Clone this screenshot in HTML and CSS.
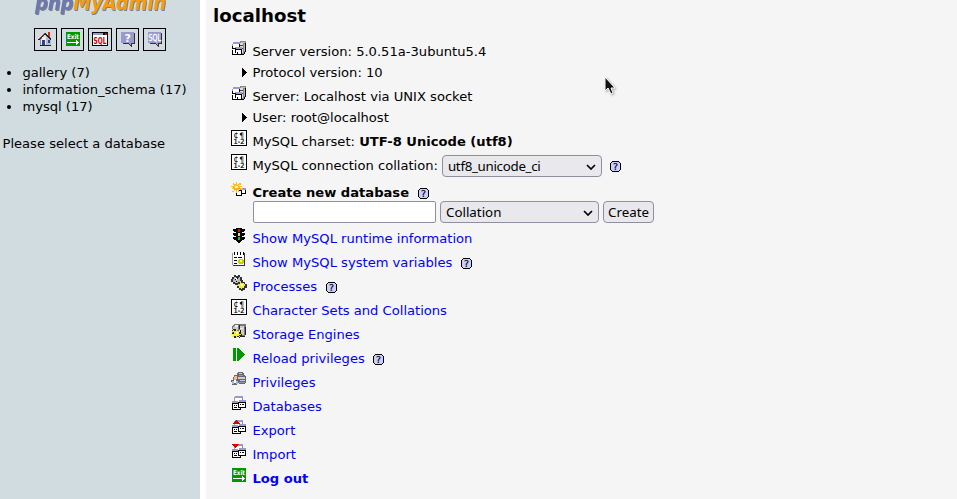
FILE: index.html
```html
<!DOCTYPE html>
<html lang="en">
<head>
<meta charset="utf-8">
<title>phpMyAdmin</title>
<link rel="stylesheet" href="styles.css">
</head>
<body>
<svg class="defs" aria-hidden="true">
  <symbol id="host" viewBox="0 -1 16 16">
    <path fill="#888" d="M8 1h1V0h6v11h-1v1h-1v1H8z"/><path fill="#ddd" d="M9 2h3v10H9z"/><path fill="#bbb" d="M10 1h4v1h-4zM13 3h1v7h-1z"/><path fill="#444" d="M9 4h3v1H9zM9 7h3v1H9z"/><path fill="#000" d="M14 2h1v9h-1zM9 13h4v1H9zM13 11h1v2h-1z"/>
    <path fill="#fff" d="M2 3h6v4H2zM5 8h5v5H5zM2 9h3v4H2z"/><path fill="#99c" d="M2 1h7v2H2zM1 3h1v2H1zM4 6h7v2H4z"/><path fill="#000" d="M1 5h1v3H1zM2 7h3v1H2zM8 3h1v3H8zM4 8h7v1H4zM4 9h1v3H4zM10 9h1v5h-1zM6 13h5v1H6zM1 9h1v5H1zM1 13h6v1H1zM6 11h1v3H6z"/>
  </symbol>
  <symbol id="charset" viewBox="0 0 16 16">
    <path fill="#000" d="M0 0h16v16H0z"/><path fill="#fff" d="M1 1h14v14H1z"/>
    <text x="2.5" y="7.8" font-size="8">¢</text><text x="8.3" y="7.5" font-size="7.5">¶</text><text x="2.5" y="14" font-size="7" textLength="11" lengthAdjust="spacingAndGlyphs" stroke="#000" stroke-width=".2">1-2</text>
  </symbol>
  <symbol id="windows" viewBox="0 -1 16 16">
    <path fill="#fff" d="M4 2h7v4H4zM2 8h6v5H2zM8 7h6v4H8z"/><path fill="#99c" d="M4 0h8v2H4zM3 1h1v4H3zM8 4h7v2H8zM1 5h6v2H1z"/>
    <path fill="#888" d="M11 2h1v2h-1z"/><path fill="#000" d="M1 7h6v1H1zM1 8h1v6H1zM2 13h8v1H2zM9 12h1v1H9zM7 6h8v1H7zM7 7h1v5H7zM14 7h1v5h-1zM8 11h6v1H8zM3 9h1v1H3zM5 9h1v1H5zM3 11h3v1H3zM9 8h1v1H9zM11 8h2v1h-2z"/>
  </symbol>
  <symbol id="new" viewBox="0 -1 16 16">
    <path fill="#fff" d="M6 9h8v4H6z"/><path fill="#99c" d="M9 6h6v2H9z"/><path fill="#000" d="M5 9h1v5H5zM6 13h5v1H6zM10 8h1v5h-1zM14 8h1v4h-1zM11 11h3v1h-3zM8 8h3v1H8z"/>
    <path fill="#fb2" d="M5 0h1v3h1V2h1V1h2v2H8v1h3v1H9v1h2v1h1v1h-2V7H8v3H7V8H6v3H5V8H4v1H3v1H1V9h2V7H1V6h2V5H0V4h3V3H2V1h1v1h2z"/><path fill="#f90" d="M4 7h2v1H4zM7 6h2v1H7zM2 5h1v1H2z"/><path fill="#ff9" d="M4 4h3v2H4z"/>
  </symbol>
  <symbol id="lights" viewBox="0 -1 16 16">
    <path fill="#000" d="M5 0h6v1h3v2h-1v1h-2v1h3v2h-1v1h-2v1h3v2h-1v1h-2v1h-1v1H9v1H7v-1H6v-1H5v-1H3v-1H2V9h3V8H3V7H2V5h3V4H3V3H2V1h3z"/>
    <path fill="#e00" d="M7 1h2v3H7z"/><path fill="#fd3" d="M7 5h2v3H7z"/><path fill="#1b4" d="M7 9h2v3H7z"/>
  </symbol>
  <symbol id="vars" viewBox="0 -1 16 16">
    <path fill="#fff" d="M2 1h11v12H2z"/><path fill="#999" d="M1 1h1v12H1z"/><path fill="#333" d="M13 1h1v13h-1zM2 13h12v1H2z"/><path fill="#000" d="M3 0h1v3H3zM6 0h1v3H6zM9 0h1v3H9zM12 0h1v3h-1zM3 5h3v1H3zM7 5h4v1H7zM3 8h3v1H3zM3 11h3v1H3z"/><path fill="#cc0" d="M8 7h4v1h1v3h-1v1H8v-1H7V8h1z"/><path fill="#ff6" d="M9 8h2v2H9z"/>
  </symbol>
  <symbol id="process" viewBox="0 0 16 16">
    <path fill="#333" d="M3 0h2v1h2V0h2v2h2v3h1v2h2v2h2v4h-2v2h-2v1h-2v-1H8v-2H6v-3H4V9H2V7H0V4h1V2h2z"/><path fill="#bbb" d="M3 2h2v1h3V2h1v5H7v1H4V7H2V4h1z"/><path fill="#fff" d="M4 3h2v2H4z"/><path fill="#ee3" d="M9 6h1v2h3v1h1v2h-1v2h-2v1h-1v-1H8v-2H6v-1h1V9h2z"/><path fill="#000" d="M4 4h1v1H4zM6 3h1v1H6zM5 6h1v1H5z"/><path fill="#fff" d="M10 9h2v2h-2z"/>
  </symbol>
  <symbol id="engine" viewBox="0 -1 16 16">
    <path fill="#777" d="M2 1h1V0h12v11h-1v2H9v-2H1V2h1z"/><path fill="#ccc" d="M3 2h4v4H2V3h1zM9 2h4v9H9z"/><path fill="#eee" d="M4 1h3v2H4zM9 4h3v1H9z"/><path fill="#222" d="M2 5h3v1h1v1h3V6h1v4h1v3h-2v1H8v-1H5v1H3v-3H1V9h1V7H1V6h1zM14 3h1v8h-1zM8 1h1v4H8zM11 12h3v1h-3z"/>
    <path fill="#ee3" d="M1 5h1v1h1v1h2V5h1v2h2V6h1v2H8v2h2v1H8v1h1v1H8v-1H6v2H5v-2H3v1H1v-1h1v-1H0v-1h3V8H1V7h1V6H1z"/><path fill="#fff" d="M5 8h2v2H5z"/>
  </symbol>
  <symbol id="reload" viewBox="0 0 16 16"><path fill="#090" d="M2 1h3v13H2zM6 1h2v1h1v1h1v1h1v1h1v1h1v1h1v1h-1v1h-1v1h-1v1h-1v1H9v1H8v1H6z"/></symbol>
  <symbol id="rights" viewBox="0 0 16 16">
    <path fill="#667" d="M6 2h1V1h5v1h1v2h1v1h1v7h-1v1H8v-1H6v2H1v-3H0V9h2V6h1V4h3z"/><path fill="#ccd" d="M8 2h3v1H8zM7 6h7v2H7zM9 9h5v1H9z"/><path fill="#999" d="M8 4h4v1H8zM8 11h6v1H8z"/><path fill="#fb7" d="M3 5h3v4H3z"/><path fill="#c73" d="M3 5h1v1H3zM5 8h1v1H5z"/><path fill="#9be" d="M1 10h2v3H1zM5 10h2v3H5z"/><path fill="#fff" d="M3 9h2v3H3z"/>
  </symbol>
  <symbol id="export" viewBox="0 0 16 16"><use href="#windows" width="16" height="16"/><path fill="#d00" d="M5 1h1v1h1v1h1v1h1v1H2V4h1V3h1V2h1z"/></symbol>
  <symbol id="import" viewBox="0 0 16 16"><use href="#windows" width="16" height="16"/><path fill="#d00" d="M1 1h7v1H7v1H6v1H5v1H4V4H3V3H2V2H1z"/></symbol>
  <symbol id="exit" viewBox="0 0 16 16">
    <path fill="#090" d="M1 1h14v14H1z"/><text x="2" y="8" font-size="6.5" font-weight="bold" fill="#fff" textLength="12" lengthAdjust="spacingAndGlyphs">Exit</text><path fill="#fff" d="M2 11h9V9h1v1h1v1h1v1h-1v1h-1v1h-1v-2H2z"/>
  </symbol>
  <symbol id="home" viewBox="0 0 16 16">
    <path fill="#888" d="M3 7h11v7H3z"/><path fill="#eee" d="M4 8h5v6H4zM5 6h4v3H5z"/><path fill="#bbb" d="M9 4h3v2h2v8H9z"/><path fill="#249" d="M5 9h3v5H5zM11 9h2v3h-2z"/><path fill="#222" d="M7 2h2v1h1v1h1v1h1v1h1v1h1v2h-1V8h-1V7h-1V6h-1V5H9V4H7v1H6v1H5v1H4v1H3v1H1V8h1V7h1V6h1V5h1V4h1V3h1zM3 14h11v1H3z"/><path fill="#d22" d="M7 2h1v1H7v1H6v1H5v1H4v1H3v1H2V7h1V6h1V5h1V4h1V3h1zM11 1h2v5h-1V5h-1z"/>
  </symbol>
  <symbol id="sql" viewBox="0 0 16 16">
    <path fill="#000" d="M0 1h16v14H0z"/><path fill="#fff" d="M1 4h14v10H1z"/><path fill="#99c" d="M1 2h10v2H1z"/><path fill="#c00" d="M13 2h2v2h-2z"/><text x="1.5" y="12.5" font-size="8" font-weight="bold" fill="#c00" textLength="13" lengthAdjust="spacingAndGlyphs">SQL</text>
  </symbol>
  <symbol id="bubble" viewBox="0 0 16 16"><path fill="#333" d="M3 13h6v1h1v1h1v1h1v-3h3V2h-1v10h-3v2h-1v-1H9v-1H3z"/><path fill="#99c" d="M1 1h13v11h-3v2h-1v-1H9v-1H1z"/></symbol>
  <symbol id="docs" viewBox="0 0 16 16"><use href="#bubble"/><text x="4.5" y="10.5" font-size="11" font-weight="bold" fill="#fff">?</text></symbol>
  <symbol id="sqldocs" viewBox="0 0 16 16"><use href="#bubble"/><text x="1.5" y="9.5" font-size="9" fill="#fff" stroke="#fff" stroke-width=".3" textLength="12.5" lengthAdjust="spacingAndGlyphs">SQL</text></symbol>
  <symbol id="help" viewBox="0 0 11 11"><path fill="#000" d="M2 0h7v1h1v1h1v7h-1v1H9v1H2v-1H1V9H0V2h1V1h1z"/><path fill="#ccf" d="M2 1h7v1h1v7H9v1H2V9H1V2h1z"/><text x="3" y="9" font-size="9.5" fill="#000" stroke="#000" stroke-width=".2">?</text></symbol>
  <symbol id="arrow" viewBox="0 0 16 16"><path d="M11 4h1v1h1v1h1v1h1v1h1v1h-1v1h-1v1h-1v1h-1v1h-1z"/></symbol>
</svg>

<aside class="sidebar">
  <svg class="logo" viewBox="0 0 200 30" role="img" aria-label="phpMyAdmin">
    <text x="35" y="26" textLength="131" lengthAdjust="spacingAndGlyphs"><tspan class="logo-php">php</tspan><tspan class="logo-admin">MyAdmin</tspan></text>
  </svg>
  <nav class="tools">
    <a class="tool"><svg class="icon"><use href="#home"/></svg></a>
    <a class="tool inset"><svg class="icon"><use href="#exit"/></svg></a>
    <a class="tool inset wide"><svg class="icon"><use href="#sql"/></svg></a>
    <a class="tool inset"><svg class="icon"><use href="#docs"/></svg></a>
    <a class="tool inset"><svg class="icon"><use href="#sqldocs"/></svg></a>
  </nav>
  <ul class="databases">
    <li>gallery (7)</li>
    <li>information_schema (17)</li>
    <li>mysql (17)</li>
  </ul>
  <p class="hint">Please select a database</p>
</aside>

<main class="main">
  <h1>localhost</h1>
  <div class="row"><svg class="icon"><use href="#host"/></svg><span>Server version: 5.0.51a-3ubuntu5.4</span></div>
  <div class="row sub"><svg class="icon"><use href="#arrow"/></svg><span>Protocol version: 10</span></div>
  <div class="row spaced"><svg class="icon"><use href="#host"/></svg><span>Server: Localhost via UNIX socket</span></div>
  <div class="row sub"><svg class="icon"><use href="#arrow"/></svg><span>User: root@localhost</span></div>
  <div class="row spaced"><svg class="icon"><use href="#charset"/></svg><span>MySQL charset: <b>UTF-8 Unicode (utf8)</b></span></div>
  <div class="row collation"><svg class="icon"><use href="#charset"/></svg><span>MySQL connection collation:</span>
    <div class="select conn"><span>utf8_unicode_ci</span><svg class="chevron" viewBox="0 0 10 6"><path d="M1 1l4 4 4-4"/></svg></div><svg class="help"><use href="#help"/></svg></div>
  <div class="row create"><svg class="icon"><use href="#new"/></svg><b>Create new database</b><svg class="help"><use href="#help"/></svg></div>
  <form class="form"><input class="name" type="text"><div class="select"><span>Collation</span><svg class="chevron" viewBox="0 0 10 6"><path d="M1 1l4 4 4-4"/></svg></div><button class="button" type="button">Create</button></form>
  <div class="row"><svg class="icon"><use href="#lights"/></svg><a>Show MySQL runtime information</a></div>
  <div class="row"><svg class="icon"><use href="#vars"/></svg><a>Show MySQL system variables</a><svg class="help"><use href="#help"/></svg></div>
  <div class="row"><svg class="icon"><use href="#process"/></svg><a>Processes</a><svg class="help"><use href="#help"/></svg></div>
  <div class="row"><svg class="icon"><use href="#charset"/></svg><a>Character Sets and Collations</a></div>
  <div class="row"><svg class="icon"><use href="#engine"/></svg><a>Storage Engines</a></div>
  <div class="row"><svg class="icon"><use href="#reload"/></svg><a>Reload privileges</a><svg class="help"><use href="#help"/></svg></div>
  <div class="row"><svg class="icon"><use href="#rights"/></svg><a>Privileges</a></div>
  <div class="row"><svg class="icon"><use href="#windows"/></svg><a>Databases</a></div>
  <div class="row"><svg class="icon"><use href="#export"/></svg><a>Export</a></div>
  <div class="row"><svg class="icon"><use href="#import"/></svg><a>Import</a></div>
  <div class="row"><svg class="icon"><use href="#exit"/></svg><a><b>Log out</b></a></div>
</main>
<svg class="cursor" viewBox="0 0 12 20"><path d="M1 1v14l3-3 3 6 2-1-2-5h4z"/></svg>
</body>
</html>
```
FILE: styles.css
```css
* { box-sizing: border-box; }
body {
  margin: 0;
  height: 499px;
  display: flex;
  gap: 6px;
  overflow: hidden;
  background: #fff;
  color: #000;
  font: 13.1px/17px "DejaVu Sans", sans-serif;
}
.defs { display: none; }
svg { display: block; flex: none; }
.sidebar { width: 200px; background: #d0dce0; }
.logo { width: 200px; height: 30px; margin-top: -16px; overflow: visible; font: italic bold 22px "DejaVu Sans", sans-serif; filter: drop-shadow(1px 1px 0 #7c8489); }
.logo-php { fill: #6c78af; }
.logo-admin { fill: #f89c0e; }
.tools { display: flex; gap: 4px; margin: 14px 0 0 34px; }
.tool { width: 23px; height: 23px; padding: 2px; border: 1px solid #000; }
.tool.inset { padding-left: 3px; }
.tool.wide { width: 24px; }
.icon { width: 16px; height: 16px; shape-rendering: crispEdges; font-family: "DejaVu Sans", sans-serif; }
.databases { margin: 13px 0 0; padding-left: 22.4px; }
.hint { margin: 20px 0 0 2.5px; }
.main { flex: 1; background: #f5f5f5; padding-left: 7px; }
h1 { margin: 4px 0 12px; font-size: 18.2px; line-height: 23px; }
.row { display: flex; align-items: center; height: 24px; padding-left: 18px; }
.row .icon { align-self: flex-start; margin: 1px 5.5px 0 0; }
.row.sub { height: 18px; }
.spaced { margin-top: 3px; }
.row.collation { height: 25px; }
.row.create { margin-top: 2px; }
.help { width: 11px; height: 11px; margin: 3px 0 0 8.5px; shape-rendering: crispEdges; font-family: "DejaVu Sans", sans-serif; }
a { color: #00f; }
.select, .name, .button {
  height: 22px;
  border: 1px solid #8f8f9d;
  border-radius: 4px;
  font: 13.333px/20px "Noto Sans", sans-serif;
}
.select { display: flex; align-items: center; justify-content: space-between; width: 159px; padding: 0 5px; background: #e9e9ed; }
.conn { width: 160px; margin: 1px 0 0 4px; letter-spacing: -.3px; }
.conn + .help { margin-top: 1px; }
.chevron { width: 10px; height: 6px; margin-top: 1px; fill: none; stroke: #000; stroke-width: 1.7; }
.form { display: flex; gap: 4px; margin: -3px 0 3px 40px; }
.name { width: 183px; padding: 0 4px; background: #fff; border-radius: 2px; }
.button { width: 51px; padding: 0; background: #e9e9ed; color: #000; }
.cursor { position: absolute; left: 604px; top: 76px; width: 12px; height: 20px; fill: #111; stroke: #fff; stroke-width: 1; filter: drop-shadow(1px 1px 1px #0005); }
```
